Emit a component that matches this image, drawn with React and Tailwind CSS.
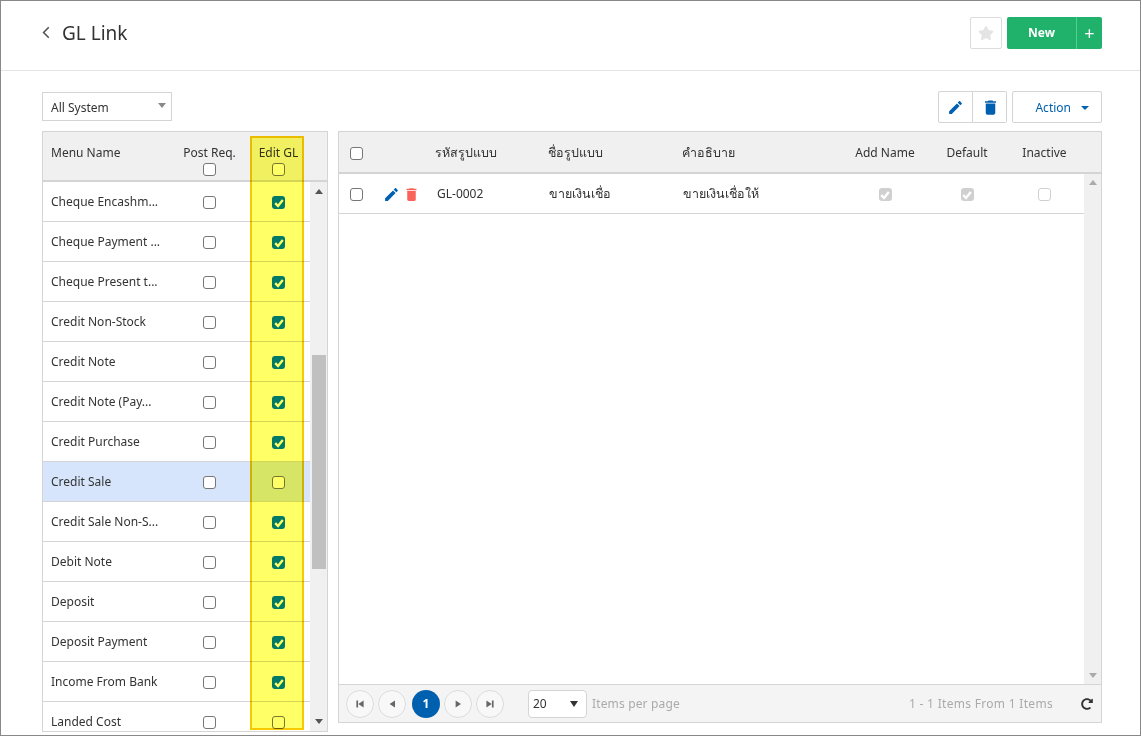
import { FaRedoAlt, FaStar } from 'react-icons/fa';

const menus = [
  { name: 'Cheque Encashm...', edit: true },
  { name: 'Cheque Payment ...', edit: true },
  { name: 'Cheque Present t...', edit: true },
  { name: 'Credit Non-Stock', edit: true },
  { name: 'Credit Note', edit: true },
  { name: 'Credit Note (Pay...', edit: true },
  { name: 'Credit Purchase', edit: true },
  { name: 'Credit Sale', edit: false, selected: true },
  { name: 'Credit Sale Non-S...', edit: true },
  { name: 'Debit Note', edit: true },
  { name: 'Deposit', edit: true },
  { name: 'Deposit Payment', edit: true },
  { name: 'Income From Bank', edit: true },
  { name: 'Landed Cost', edit: false },
];

function CheckBox({ checked, disabled }) {
  if (checked) {
    return (
      <span className={`flex h-[13px] w-[13px] items-center justify-center rounded-[3px] ${disabled ? 'bg-[#d0d0d0]' : 'bg-[#007aff]'}`}>
        <svg viewBox="0 0 12 12" className="h-[12px] w-[12px]" fill="none" stroke="white" strokeWidth="2.4">
          <path d="M2.2 6.2 5 9l4.8-6" />
        </svg>
      </span>
    );
  }
  return (
    <span className={`block h-[13px] w-[13px] rounded-[3px] border bg-white ${disabled ? 'border-[#d0d0d0]' : 'border-[#767676]'}`} />
  );
}

function EditIcon({ className }) {
  return (
    <svg viewBox="0 0 24 24" className={className} fill="currentColor">
      <path d="M3 17.25V21h3.75L17.81 9.94l-3.75-3.75L3 17.25zM20.71 7.04c.39-.39.39-1.02 0-1.41l-2.34-2.34c-.39-.39-1.02-.39-1.41 0l-1.83 1.83 3.75 3.75 1.83-1.83z" />
    </svg>
  );
}

function TrashIcon({ className }) {
  return (
    <svg viewBox="0 0 24 24" className={className} fill="currentColor">
      <path d="M6 19c0 1.1.9 2 2 2h8c1.1 0 2-.9 2-2V7H6v12zM19 4h-3.5l-1-1h-5l-1 1H5v2h14V4z" />
    </svg>
  );
}

function PageButton({ d }) {
  return (
    <button className="flex h-[28px] w-[28px] items-center justify-center rounded-full border border-[#dcdcdc] bg-[#f8f8f8]">
      <svg viewBox="0 0 10 10" className="h-[12px] w-[12px]" fill="#666">
        <path d={d} />
      </svg>
    </button>
  );
}

function MenuPanel() {
  return (
    <div className="relative flex h-[601px] w-[286px] shrink-0 flex-col overflow-hidden border border-[#d4d4d4] bg-white">
      <div className="flex h-[50px] shrink-0 border-b-2 border-[#d4d4d4] bg-[#f0f0f0]">
        <div className="w-[127px] pl-2 pt-[13px]">Menu Name</div>
        <div className="flex w-[79px] flex-col items-center pt-[13px]">
          <span>Post Req.</span>
          <span className="mt-[2px]"><CheckBox /></span>
        </div>
        <div className="flex w-[59px] flex-col items-center pt-[13px]">
          <span>Edit GL</span>
          <span className="mt-[2px]"><CheckBox /></span>
        </div>
      </div>
      <div className="flex min-h-0 flex-1">
        <div className="min-w-0 flex-1 overflow-hidden">
          {menus.map((m) => (
            <div key={m.name} className={`flex h-[40px] border-b border-[#d4d4d4] pt-[12px] ${m.selected ? 'bg-[#d6e5fb]' : ''}`}>
              <div className="w-[127px] truncate pl-2">{m.name}</div>
              <div className="flex w-[79px] justify-center pt-[2px]"><CheckBox /></div>
              <div className="flex w-[59px] justify-center pt-[2px]"><CheckBox checked={m.edit} /></div>
            </div>
          ))}
        </div>
        <div className="flex w-[17px] shrink-0 flex-col items-center bg-[#f0f0f0]">
          <span className="mt-[7px] h-0 w-0 border-x-[4px] border-b-[5px] border-x-transparent border-b-[#555]" />
          <span className="mt-[161px] h-[214px] w-[14px] bg-[#c0c0c0]" />
          <span className="mt-[150px] h-0 w-0 border-x-[4px] border-t-[5px] border-x-transparent border-t-[#555]" />
        </div>
      </div>
      {/* yellow marker drawn over the Edit GL column */}
      <div className="pointer-events-none absolute left-[207px] top-[4px] h-[594px] w-[54px] border-2 border-[#f8c800] bg-[#ffff66] mix-blend-multiply" />
    </div>
  );
}

function TemplatePanel() {
  return (
    <div className="flex h-[592px] min-w-0 flex-1 flex-col border border-[#d4d4d4] bg-white">
      <div className="flex h-[42px] shrink-0 items-center border-b-2 border-[#d4d4d4] bg-[#f0f0f0]">
        <div className="flex w-[35px] justify-center pt-[2px]"><CheckBox /></div>
        <div className="w-[61px]" />
        <div className="w-[113px] pt-[2px] text-[12.5px]">รหัสรูปแบบ</div>
        <div className="w-[134px] pt-[2px] text-[12.5px]">ชื่อรูปแบบ</div>
        <div className="w-[160px] pt-[2px] text-[12.5px]">คำอธิบาย</div>
        <div className="w-[86px] pt-px text-center">Add Name</div>
        <div className="w-[78px] pt-px text-center">Default</div>
        <div className="w-[77px] pt-px text-center">Inactive</div>
      </div>
      <div className="flex min-h-0 flex-1">
        <div className="min-w-0 flex-1">
          <div className="flex h-[40px] items-center border-b border-[#d4d4d4]">
            <div className="flex w-[35px] justify-center pt-[2px]"><CheckBox /></div>
            <div className="flex w-[62px] items-center pl-[9px] pt-[2px]">
              <EditIcon className="h-[17px] w-[17px] text-[#0060b0]" />
              <TrashIcon className="ml-[3px] h-[17px] w-[17px] text-[#f8645a]" />
            </div>
            <div className="w-[112px] pl-px">GL-0002</div>
            <div className="w-[134px] pl-px text-[12.5px]">ขายเงินเชื่อ</div>
            <div className="w-[160px] pl-px text-[12.5px]">ขายเงินเชื่อให้</div>
            <div className="flex w-[86px] justify-center pt-[2px]"><CheckBox checked disabled /></div>
            <div className="flex w-[78px] justify-center pt-[2px]"><CheckBox checked disabled /></div>
            <div className="flex w-[77px] justify-center pt-[2px]"><CheckBox disabled /></div>
          </div>
        </div>
        <div className="flex w-[17px] shrink-0 flex-col items-center justify-between bg-[#f0f0f0] py-[6px]">
          <span className="h-0 w-0 border-x-[4px] border-b-[5px] border-x-transparent border-b-[#aaa]" />
          <span className="h-0 w-0 border-x-[4px] border-t-[5px] border-x-transparent border-t-[#aaa]" />
        </div>
      </div>
      <div className="flex h-[38px] shrink-0 items-center border-t border-[#d4d4d4] bg-[#f4f4f4] pl-[7px] pr-[6px]">
        <div className="flex gap-[4px]">
          <PageButton d="M2 2h1.4v6H2zM8 2v6L3.6 5z" />
          <PageButton d="M7.5 2v6L3 5z" />
          <button className="ml-[2px] flex h-[28px] w-[28px] items-center justify-center rounded-full bg-[#0060b0] font-bold text-white">1</button>
          <PageButton d="M3 2v6l4.5-3z" />
          <PageButton d="M2 2v6l4.4-3zM6.6 2H8v6H6.6z" />
        </div>
        <div className="ml-[24px] flex h-[28px] w-[59px] items-center justify-between rounded-[4px] border border-[#d4d4d4] bg-white pl-[4px] pr-[8px]">
          <span>20</span>
          <span className="h-0 w-0 border-x-[4px] border-t-[6px] border-x-transparent border-t-[#333]" />
        </div>
        <span className="ml-[5px] tracking-[0.15px] text-[#aaa]">Items per page</span>
        <span className="ml-auto tracking-[0.3px] text-[#aaa]">1 - 1 Items From 1 Items</span>
        <FaRedoAlt className="ml-[28px] mr-[2px] h-[12px] w-[12px] text-[#333]" />
      </div>
    </div>
  );
}

export default function App() {
  return (
    <div className="h-[736px] w-[1141px] overflow-hidden border border-[#888] bg-white font-['Noto_Sans','Noto_Sans_CJK_SC',sans-serif] text-[12px] leading-[16px] text-[#333]">
      <header className="flex h-[70px] items-center border-b border-[#e4e4e4] pb-[6px] pl-[41px] pr-[38px]">
        <svg viewBox="0 0 10 16" className="h-[13px] w-[8px]" fill="none" stroke="#555" strokeWidth="2">
          <path d="M8.5 1.5 2 8l6.5 6.5" />
        </svg>
        <h1 className="ml-[12px] text-[19px] leading-[28px]">GL Link</h1>
        <button className="ml-auto flex h-[32px] w-[32px] items-center justify-center rounded-[2px] border border-[#dcdcdc]">
          <FaStar className="h-[16px] w-[16px] text-[#e4e4e4]" />
        </button>
        <div className="ml-[5px] flex h-[32px] w-[95px] rounded-[2px] bg-[#20b16a] text-white">
          <button className="w-[69px] font-bold">New</button>
          <button className="flex-1 border-l border-[#4fd08f] text-[18px]">+</button>
        </div>
      </header>
      <main className="pl-[41px] pr-[38px] pt-[20px]">
        <div className="flex h-[32px] items-start">
          <div className="relative mt-[1px] flex h-[29px] w-[130px] items-center border border-[#d4d4d4] pl-2 pt-[2px]">
            All System
            <span className="absolute right-[5px] top-[10px] h-0 w-0 border-x-[4px] border-t-[5px] border-x-transparent border-t-[#888]" />
          </div>
          <button className="ml-auto flex h-[32px] w-[35px] items-center justify-center rounded-l-[2px] border border-[#d4d4d4]">
            <EditIcon className="h-[17px] w-[17px] text-[#0060b0]" />
          </button>
          <button className="flex h-[32px] w-[34px] items-center justify-center rounded-r-[2px] border border-l-0 border-[#d4d4d4] pl-[2px]">
            <TrashIcon className="h-[19px] w-[19px] text-[#0060b0]" />
          </button>
          <button className="ml-[5px] flex h-[32px] w-[90px] items-center justify-end rounded-[2px] border border-[#d4d4d4] pr-[12px] pt-px text-[#0060b0]">
            Action
            <span className="ml-[10px] h-0 w-0 border-x-[4px] border-t-[4px] border-x-transparent border-t-[#0060b0]" />
          </button>
        </div>
        <div className="mt-[8px] flex items-start gap-[10px]">
          <MenuPanel />
          <TemplatePanel />
        </div>
      </main>
    </div>
  );
}
